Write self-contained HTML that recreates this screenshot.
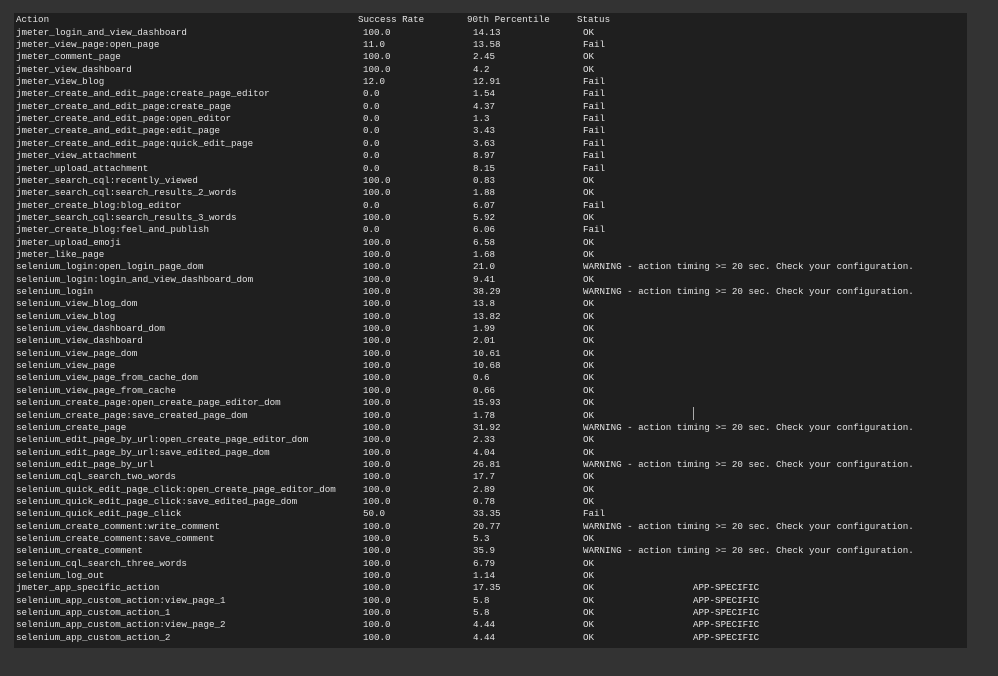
<!DOCTYPE html>
<html><head><meta charset="utf-8"><style>
html,body{margin:0;padding:0;background:#333;width:998px;height:676px;overflow:hidden}
#p{position:absolute;left:14px;top:13px;width:953px;height:635px;background:#1f1f1f}
.r{position:absolute;left:0;height:12.35px;line-height:12.35px;font:9.2px "Liberation Mono",monospace;color:#e2e2e2;white-space:pre}
.r span{position:absolute;top:0}
.a{left:2px}.b{left:349px}.c{left:459px}.d{left:569px}.e{left:679px}
</style></head><body><div id="p"></div>
<div id="rows"></div>
<div style="position:absolute;left:693px;top:407px;width:1px;height:13px;background:#aaa"></div>
<script>
var H=[["Action","Success Rate","90th Percentile","Status",""]];
var D=`jmeter_login_and_view_dashboard|100.0|14.13|OK
jmeter_view_page:open_page|11.0|13.58|Fail
jmeter_comment_page|100.0|2.45|OK
jmeter_view_dashboard|100.0|4.2|OK
jmeter_view_blog|12.0|12.91|Fail
jmeter_create_and_edit_page:create_page_editor|0.0|1.54|Fail
jmeter_create_and_edit_page:create_page|0.0|4.37|Fail
jmeter_create_and_edit_page:open_editor|0.0|1.3|Fail
jmeter_create_and_edit_page:edit_page|0.0|3.43|Fail
jmeter_create_and_edit_page:quick_edit_page|0.0|3.63|Fail
jmeter_view_attachment|0.0|8.97|Fail
jmeter_upload_attachment|0.0|8.15|Fail
jmeter_search_cql:recently_viewed|100.0|0.83|OK
jmeter_search_cql:search_results_2_words|100.0|1.88|OK
jmeter_create_blog:blog_editor|0.0|6.07|Fail
jmeter_search_cql:search_results_3_words|100.0|5.92|OK
jmeter_create_blog:feel_and_publish|0.0|6.06|Fail
jmeter_upload_emoji|100.0|6.58|OK
jmeter_like_page|100.0|1.68|OK
selenium_login:open_login_page_dom|100.0|21.0|WARNING - action timing >= 20 sec. Check your configuration.
selenium_login:login_and_view_dashboard_dom|100.0|9.41|OK
selenium_login|100.0|38.29|WARNING - action timing >= 20 sec. Check your configuration.
selenium_view_blog_dom|100.0|13.8|OK
selenium_view_blog|100.0|13.82|OK
selenium_view_dashboard_dom|100.0|1.99|OK
selenium_view_dashboard|100.0|2.01|OK
selenium_view_page_dom|100.0|10.61|OK
selenium_view_page|100.0|10.68|OK
selenium_view_page_from_cache_dom|100.0|0.6|OK
selenium_view_page_from_cache|100.0|0.66|OK
selenium_create_page:open_create_page_editor_dom|100.0|15.93|OK
selenium_create_page:save_created_page_dom|100.0|1.78|OK
selenium_create_page|100.0|31.92|WARNING - action timing >= 20 sec. Check your configuration.
selenium_edit_page_by_url:open_create_page_editor_dom|100.0|2.33|OK
selenium_edit_page_by_url:save_edited_page_dom|100.0|4.04|OK
selenium_edit_page_by_url|100.0|26.81|WARNING - action timing >= 20 sec. Check your configuration.
selenium_cql_search_two_words|100.0|17.7|OK
selenium_quick_edit_page_click:open_create_page_editor_dom|100.0|2.89|OK
selenium_quick_edit_page_click:save_edited_page_dom|100.0|0.78|OK
selenium_quick_edit_page_click|50.0|33.35|Fail
selenium_create_comment:write_comment|100.0|20.77|WARNING - action timing >= 20 sec. Check your configuration.
selenium_create_comment:save_comment|100.0|5.3|OK
selenium_create_comment|100.0|35.9|WARNING - action timing >= 20 sec. Check your configuration.
selenium_cql_search_three_words|100.0|6.79|OK
selenium_log_out|100.0|1.14|OK
jmeter_app_specific_action|100.0|17.35|OK|APP-SPECIFIC
selenium_app_custom_action:view_page_1|100.0|5.8|OK|APP-SPECIFIC
selenium_app_custom_action_1|100.0|5.8|OK|APP-SPECIFIC
selenium_app_custom_action:view_page_2|100.0|4.44|OK|APP-SPECIFIC
selenium_app_custom_action_2|100.0|4.44|OK|APP-SPECIFIC`.split("\n").map(function(l){return l.split("|")});
var all=H.concat(D),h="";
all.forEach(function(r,i){
 var hd=i==0;
 h+='<div class="r" style="left:14px;width:953px;top:'+(14.3+i*12.35).toFixed(2)+'px">'+
 '<span class="a">'+r[0]+'</span><span class="b" style="left:'+(hd?344:349)+'px">'+r[1]+'</span><span class="c" style="left:'+(hd?453:459)+'px">'+r[2]+'</span><span class="d" style="left:'+(hd?563:569)+'px">'+r[3]+'</span>'+(r[4]?'<span class="e">'+r[4]+'</span>':'')+'</div>';
});
document.getElementById("rows").innerHTML=h;
</script></body></html>
